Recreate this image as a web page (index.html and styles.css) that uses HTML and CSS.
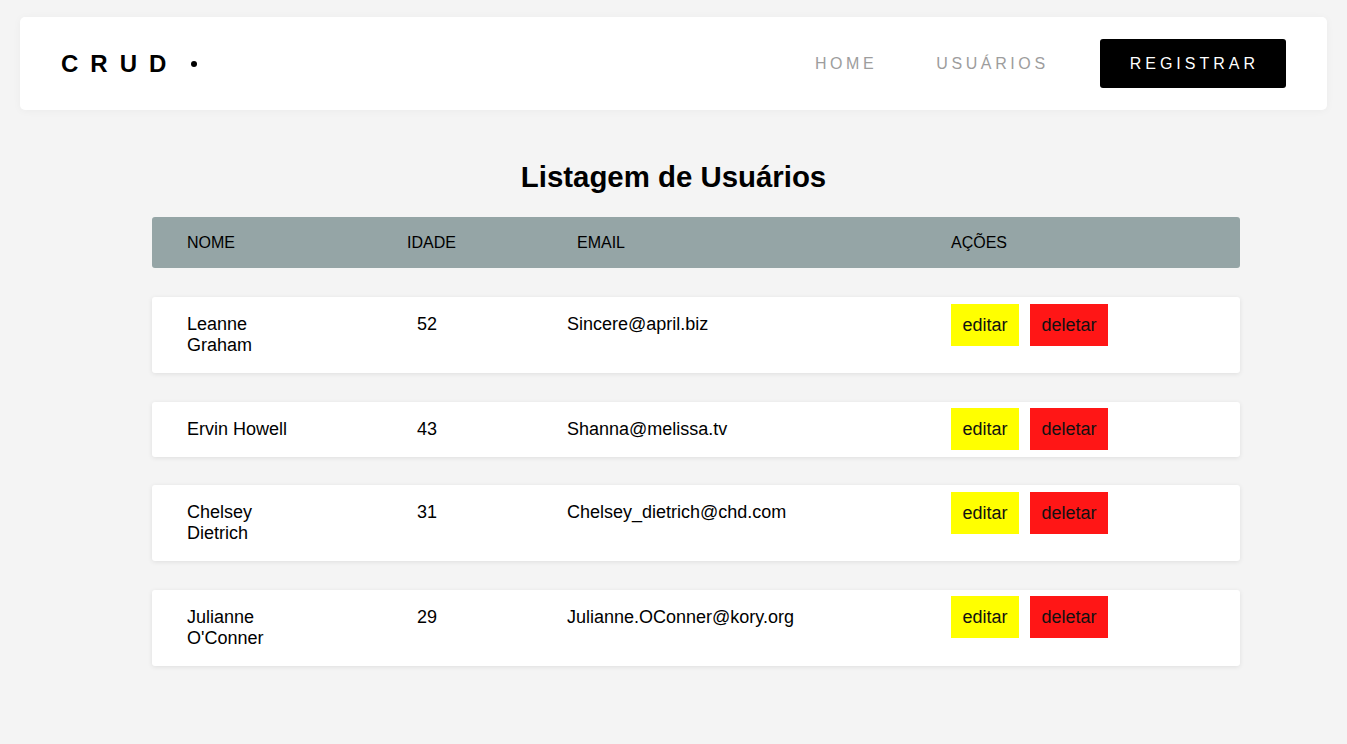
FILE: index.html
```html
<!DOCTYPE html>
<html lang="pt-BR">
<head>
<meta charset="utf-8">
<title>CRUD</title>
<link rel="stylesheet" href="styles.css">
</head>
<body>
<header class="topbar">
  <div class="logo"><span class="logo-text">CRUD</span><span class="logo-dot"></span></div>
  <nav class="nav">
    <a class="nav-link" href="#">HOME</a>
    <a class="nav-link nav-link-2" href="#">USUÁRIOS</a>
    <a class="nav-btn" href="#">REGISTRAR</a>
  </nav>
</header>

<main class="content">
  <h1 class="title">Listagem de Usuários</h1>
  <div class="list">
    <div class="thead">
      <div>NOME</div>
      <div>IDADE</div>
      <div>EMAIL</div>
      <div>AÇÕES</div>
    </div>

    <div class="row">
      <div class="name">Leanne Graham</div>
      <div>52</div>
      <div>Sincere@april.biz</div>
      <div><span class="btn btn-edit">editar</span><span class="btn btn-del">deletar</span></div>
    </div>

    <div class="row">
      <div class="name">Ervin Howell</div>
      <div>43</div>
      <div>Shanna@melissa.tv</div>
      <div><span class="btn btn-edit">editar</span><span class="btn btn-del">deletar</span></div>
    </div>

    <div class="row">
      <div class="name">Chelsey Dietrich</div>
      <div>31</div>
      <div>Chelsey_dietrich@chd.com</div>
      <div><span class="btn btn-edit">editar</span><span class="btn btn-del">deletar</span></div>
    </div>

    <div class="row">
      <div class="name">Julianne O'Conner</div>
      <div>29</div>
      <div>Julianne.OConner@kory.org</div>
      <div><span class="btn btn-edit">editar</span><span class="btn btn-del">deletar</span></div>
    </div>
  </div>
</main>
</body>
</html>
```

FILE: styles.css
```css
* {
  box-sizing: border-box;
}

html, body {
  margin: 0;
  padding: 0;
}

body {
  background: #f4f4f4;
  font-family: "Liberation Sans", Arial, sans-serif;
  color: #000;
  min-height: 744px;
}

.topbar {
  margin: 17px 20px 0 20px;
  height: 93px;
  background: #fff;
  border-radius: 5px;
  box-shadow: 0 1px 8px rgba(0, 0, 0, 0.04);
  display: flex;
  align-items: center;
  justify-content: space-between;
  padding: 0 41px 0 41px;
}

.logo {
  display: flex;
  align-items: center;
}

.logo-text {
  font-size: 24px;
  font-weight: bold;
  letter-spacing: 12px;
  line-height: 28px;
}

.logo-dot {
  width: 6px;
  height: 6px;
  border-radius: 50%;
  background: #000;
  margin-left: 13px;
  margin-top: 1px;
}

.nav {
  display: flex;
  align-items: center;
}

.nav-link {
  font-size: 16px;
  letter-spacing: 3.6px;
  color: #9d9d9d;
  text-decoration: none;
  line-height: 19px;
}

.nav-link-2 {
  margin-left: 59px;
}

.nav-btn {
  margin-left: 51px;
  display: block;
  height: 49px;
  line-height: 49px;
  padding: 0 27px 0 30px;
  background: #000;
  color: #fff;
  font-size: 16px;
  letter-spacing: 4px;
  text-decoration: none;
  border-radius: 3px;
}

.content {
  padding-top: 50px;
}

.title {
  margin: 0 0 23px 0;
  text-align: center;
  font-size: 29.4px;
  line-height: 34px;
  font-weight: bold;
}

.list {
  margin-left: 152px;
  width: 1088px;
}

.thead {
  display: grid;
  grid-template-columns: 220px 170px 374px 1fr;
  padding: 16px 0 16px 35px;
  background: #95a5a6;
  border-radius: 3px;
  font-size: 16px;
  line-height: 19px;
}

.row {
  display: grid;
  grid-template-columns: 230px 150px 384px 1fr;
  align-items: start;
  margin-top: 29px;
  padding: 17px 0 17px 35px;
  background: #fff;
  border-radius: 3px;
  box-shadow: 0 1px 5px rgba(0, 0, 0, 0.09);
  font-size: 18px;
  line-height: 21px;
}

.row + .row {
  margin-top: 28.5px;
}

.name {
  max-width: 110px;
}

.btn {
  padding: 10.5px 11.5px 11.5px 11.5px;
  color: #111;
}

.btn-edit {
  background: #ffff00;
}

.btn-del {
  background: #ff1616;
  margin-left: 11px;
}
```
